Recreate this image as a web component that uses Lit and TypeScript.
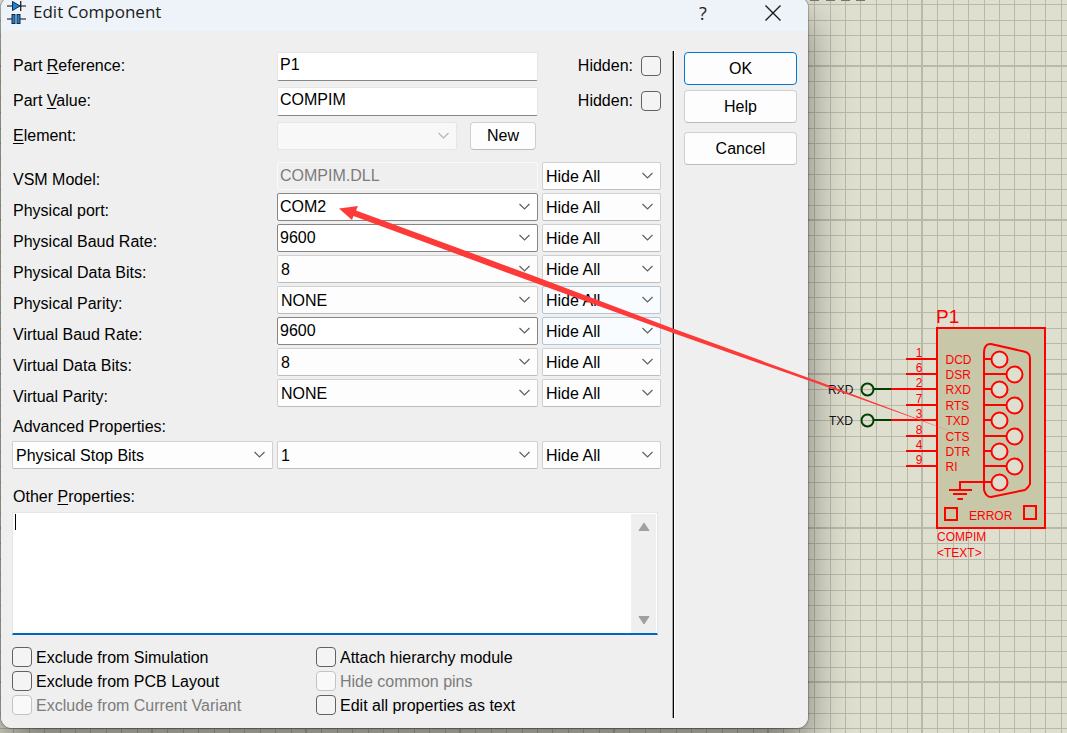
import { LitElement, html, svg, css } from "lit";
import { customElement } from "lit/decorators.js";
import { classMap } from "lit/directives/class-map.js";

interface FieldRow {
  label: string;
  value: string;
  kind: "readonly" | "editable" | "list";
  tint?: boolean;
}

const MODEL_FIELDS: FieldRow[] = [
  { label: "VSM Model:", value: "COMPIM.DLL", kind: "readonly" },
  { label: "Physical port:", value: "COM2", kind: "editable" },
  { label: "Physical Baud Rate:", value: "9600", kind: "editable" },
  { label: "Physical Data Bits:", value: "8", kind: "list" },
  { label: "Physical Parity:", value: "NONE", kind: "list", tint: true },
  { label: "Virtual Baud Rate:", value: "9600", kind: "editable", tint: true },
  { label: "Virtual Data Bits:", value: "8", kind: "list" },
  { label: "Virtual Parity:", value: "NONE", kind: "list" },
];

const GRID_PITCH = 15.4;
const GRID_ORIGIN = { x: 922, y: 66 };

/* Sheet grid: a thin line per step, a heavy one every ten steps. */
@customElement("sheet-grid")
export class SheetGrid extends LitElement {
  static styles = css`
    :host { display: block; overflow: hidden; }
    .grid { display: block; width: 100%; height: 100%; }
  `;

  private lines(origin: number, vertical: boolean) {
    const out = [];
    for (let i = -62; i < 110; i++) {
      const at = Math.round(origin + i * GRID_PITCH);
      if (at < 0) continue;
      const heavy = i % 10 === 0;
      const start = heavy ? at - 1 : at;
      const size = heavy ? 2 : 1;
      out.push(
        vertical
          ? svg`<rect x=${start} y="0" width=${size} height="100%" fill="#b9b9aa"></rect>`
          : svg`<rect x="0" y=${start} width="100%" height=${size} fill="#b9b9aa"></rect>`
      );
    }
    return out;
  }

  render() {
    return html`<svg class="grid" aria-hidden="true">
      ${this.lines(GRID_ORIGIN.x, true)}${this.lines(GRID_ORIGIN.y, false)}
    </svg>`;
  }
}

/* The COMPIM connector with its pins and the RXD / TXD terminals. */
@customElement("compim-symbol")
export class CompimSymbol extends LitElement {
  static styles = css`
    :host { display: block; }
    .drawing { display: block; }
    .text { font: 12px "Liberation Sans", Arial, sans-serif; fill: #f00; }
    .name { font-size: 19px; }
    .terminal { fill: #111; }
    .wire { stroke: #f00; stroke-width: 2; fill: none; }
    .lead { stroke: #004000; stroke-width: 2; fill: none; }
    .socket { stroke: #f00; stroke-width: 2; fill: #dfdfd0; }
  `;

  render() {
    const pins: [string, string, number][] = [
      ["1", "DCD", 359],
      ["6", "DSR", 374],
      ["2", "RXD", 389],
      ["7", "RTS", 405],
      ["3", "TXD", 420],
      ["8", "CTS", 436],
      ["4", "DTR", 451],
      ["9", "RI", 466],
    ];
    return html`<svg class="drawing" width="259" height="733" viewBox="808 0 259 733">
      ${[810, 826, 841, 856].map((x) => svg`<rect x=${x} y="0" width="9" height="1" fill="#77776e"></rect>`)}
      <text class="text name" x="936" y="323">P1</text>
      <rect x="937" y="328" width="108" height="200" fill="#c8c8a9" stroke="#f00" stroke-width="2"></rect>
      <path class="wire" d="M984 352 Q984.500 343.500 991 344 L1024 351.500 Q1030 353 1030 358 V484 Q1029 487 1025 490 L991 497 Q986 497 984 490 Z"></path>
      ${pins.map(
        ([num, label, y], i) => svg`
          <path class="wire" d="M${i === 2 || i === 4 ? 891 : 906} ${y} H937"></path>
          <path class="wire" d="M984 ${y} H${i % 2 ? 1007 : 992}"></path>
          <circle class="socket" cx=${i % 2 ? 1014.5 : 999.5} cy=${y + 0.5} r="8"></circle>
          <text class="text" x="919" y=${y - 2} text-anchor="middle">${num}</text>
          <text class="text" x="945.5" y=${y + 5}>${label}</text>`
      )}
      <path class="wire" d="M992 482 H960 V490 M949 490 H972 M953 494 H967 M957.500 499 H963"></path>
      <circle class="socket" cx="999.500" cy="482.500" r="8"></circle>
      <rect class="wire" x="945" y="508" width="12" height="12"></rect>
      <rect class="wire" x="1024" y="506" width="12" height="13"></rect>
      <text class="text" x="969" y="520">ERROR</text>
      <text class="text" x="937" y="541">COMPIM</text>
      <text class="text" x="937" y="557">&lt;TEXT&gt;</text>
      ${[389, 420].map(
        (y) => svg`<circle class="lead" cx="867.5" cy=${y + 0.5} r="6"></circle>
          <path class="lead" d="M874 ${y} H891"></path>`
      )}
      <text class="text terminal" x="828" y="394">RXD</text>
      <text class="text terminal" x="829" y="425">TXD</text>
    </svg>`;
  }
}

@customElement("edit-component-dialog")
export class EditComponentDialog extends LitElement {
  static styles = css`
    :host {
      display: block;
      font: 16px/18px "Liberation Sans", Arial, sans-serif;
      color: #000;
    }
    * { box-sizing: border-box; }
    .window {
      background: #efefef;
      border-radius: 11px;
      overflow: hidden;
    }
    .titlebar {
      display: flex;
      align-items: center;
      height: 34px;
      padding: 0 24px 0 6px;
      background: #eef3f9;
    }
    .title {
      flex: 1;
      margin: 0;
      padding: 0 0 4px 6px;
      font: 17px/24px "Open Sans", "Noto Sans", sans-serif;
      color: #1b1b1b;
    }
    .caption-button {
      display: grid;
      place-items: center;
      width: 22px;
      height: 30px;
      margin: 0 0 3px 48px;
      padding: 0;
      border: 0;
      background: none;
      font: 18px/24px "Open Sans", "Noto Sans", sans-serif;
      color: #1b1b1b;
    }
    .body {
      display: flex;
      padding: 20px 11px 10px 11px;
    }
    .form {
      flex: 1;
      min-width: 0;
      padding: 1px 0 3px;
    }
    .fields {
      display: grid;
      grid-template-columns: 265px minmax(0, 1fr) 119px;
    }
    .identity { row-gap: 7px; grid-auto-rows: 28px; align-items: center; }
    .identity .box-cell { align-self: start; }
    .model { row-gap: 3px; grid-auto-rows: 28px; margin-top: 12px; }
    .model .caption { padding: 9px 0 0 1px; }
    .advanced { grid-auto-rows: 28px; margin-top: 5px; }
    .caption { padding-left: 1px; }
    .block-caption { display: block; padding-left: 1px; margin-top: 11px; }
    .other-caption { margin-top: 19px; }
    .key { text-decoration: underline; text-underline-offset: 2px; text-decoration-thickness: 1px; }

    .text-box {
      width: 100%;
      min-width: 0;
      height: 29px;
      margin: 0;
      padding: 0 2px 3px;
      border: 1px solid #e6e6e6;
      border-bottom-color: #868686;
      border-radius: 2px;
      background: #fff;
      font: inherit;
      color: #000;
      outline: none;
    }
    .text-box:disabled {
      height: 28px;
      padding-bottom: 1px;
      background: #efefef;
      border-color: #f9f9f9;
      color: #7c7c7c;
    }
    .box-cell { padding-right: 4px; display: flex; min-width: 0; }
    .element-cell { display: flex; justify-content: space-between; gap: 13px; padding-right: 6px; min-width: 0; }
    .combo { display: grid; flex: 1; min-width: 0; height: 28px; }
    .select {
      grid-area: 1 / 1;
      appearance: none;
      width: 100%;
      min-width: 0;
      height: 28px;
      margin: 0;
      padding: 2px 24px 0 3px;
      border: 1px solid #d0d0d0;
      border-bottom-color: #bdbdbd;
      border-radius: 2px;
      background: #fdfdfd;
      font: inherit;
      color: #000;
      opacity: 1;
      outline: none;
    }
    .editable .select { border-color: #868686; background: #fff; padding: 0 24px 0 2px; }
    .tint .select { border-color: #b4c5d3; background: #f9fcff; }
    .disabled .select { border-color: #e6e6e6; background: #f8f8f8; }
    .chevron { grid-area: 1 / 1; justify-self: end; align-self: center; margin-right: 7px; pointer-events: none; stroke: #606060; fill: none; }
    .disabled .chevron { stroke: #b5b5b5; }

    .hidden-toggle { display: flex; align-items: center; justify-content: flex-end; gap: 8px; }
    .check {
      appearance: none;
      flex: none;
      width: 20px;
      height: 20px;
      margin: 0;
      border: 1px solid #626262;
      border-radius: 4px;
      background: #f4f4f4;
    }
    .check:disabled { border-color: #c4c4c4; background: #f9f9f9; }

    .button {
      width: 100%;
      height: 33px;
      margin: 0;
      padding: 0;
      border: 1px solid #d0d0d0;
      border-bottom-color: #bcbcbc;
      border-radius: 4px;
      background: #fdfdfd;
      font: inherit;
      color: #000;
    }
    .button.small { flex: none; width: 66px; height: 28px; }
    .button.default { border-color: #0078d4; margin-bottom: 5px; }
    .button.help { margin-bottom: 9px; }

    .notes {
      display: flex;
      position: relative;
      height: 123px;
      margin: 6px 3px 0 0;
      border: 1px solid #e6e6e6;
      border-bottom: 2px solid #0067c0;
      background: #fff;
    }
    .notes-text {
      flex: 1;
      min-width: 0;
      margin: 0;
      padding: 1px 2px;
      border: 0;
      background: #fff;
      font: inherit;
      resize: none;
      outline: none;
    }
    .insertion { position: absolute; left: 2px; top: 1px; width: 1px; height: 16px; background: #000; }
    .scroll {
      display: flex;
      flex-direction: column;
      justify-content: space-between;
      width: 25px;
      margin: 1px 1px 0 0;
      padding: 5px 0;
      background: #efefef;
    }
    .scroll-arrow { display: grid; place-items: center; height: 16px; margin: 0; padding: 0; border: 0; background: none; }

    .options { display: grid; grid-template-columns: 304px 1fr; gap: 4px 0; margin-top: 12px; }
    .option { display: flex; align-items: center; gap: 4px; }
    .option.off { color: #7c7c7c; }
    .option-text { padding-top: 2px; }

    .divider {
      flex: none;
      width: 3px;
      margin: 0 9px 0 11px;
      border-left: 1px solid #a5a5a5;
      border-right: 1px solid #fff;
      background: #000;
    }
    .actions { flex: none; width: 113px; padding-top: 1px; }
  `;

  private combo(id: string, value: string, label: string, cls: Record<string, boolean> = {}) {
    return html`<div class=${classMap({ combo: true, ...cls })}>
      <select class="select" id=${id} aria-label=${label} ?disabled=${!!cls.disabled}>
        <option>${value}</option>
      </select>
      <svg class="chevron" width="13" height="8" viewBox="0 0 13 8" aria-hidden="true">
        <path d="M1.500 1 L6.500 6 L11.500 1" stroke-width="1.200"></path>
      </svg>
    </div>`;
  }

  private hiddenToggle(id: string) {
    return html`<label class="hidden-toggle" for=${id}>Hidden:<input class="check" type="checkbox" id=${id} /></label>`;
  }

  private option(text: string, off = false) {
    return html`<label class=${classMap({ option: true, off })}>
      <input class="check" type="checkbox" ?disabled=${off} /><span class="option-text">${text}</span></label>`;
  }

  private modelRow(row: FieldRow, i: number) {
    const id = `field-${i}`;
    return html`
      <label class="caption" for=${id}>${row.label}</label>
      <div class="box-cell">
        ${row.kind === "readonly"
          ? html`<input class="text-box" id=${id} disabled .value=${row.value} />`
          : this.combo(id, row.value, row.label, { editable: row.kind === "editable" })}
      </div>
      ${this.combo(`${id}-visibility`, "Hide All", `${row.label} visibility`, { tint: !!row.tint })}
    `;
  }

  render() {
    return html`<section class="window" role="dialog" aria-labelledby="title">
      <header class="titlebar">
        <svg width="20" height="28" viewBox="0 0 20 28" aria-hidden="true">
          <path d="M0 6 H19 M0 19 H5 M13 19 H19" stroke="#555" stroke-width="1.300" fill="none"></path>
          <path d="M13.700 1 V11" stroke="#222" stroke-width="1.300"></path>
          <path d="M5.500 1.500 L13 6 L5.500 10.500 Z" fill="#1a84da" stroke="#122a44"></path>
          <rect x="5" y="14.500" width="3" height="9" fill="#1a84da" stroke="#122a44"></rect>
          <rect x="10" y="14.500" width="3" height="9" fill="#1a84da" stroke="#122a44"></rect>
        </svg>
        <h1 class="title" id="title">Edit Component</h1>
        <button class="caption-button" aria-label="Help">?</button>
        <button class="caption-button" aria-label="Close">
          <svg width="16" height="16" viewBox="0 0 16 16"><path d="M0.500 0.500 L15.500 15.500 M15.500 0.500 L0.500 15.500" stroke="#1b1b1b" stroke-width="1.400"></path></svg>
        </button>
      </header>
      <div class="body">
        <div class="form">
          <div class="fields identity">
            <label class="caption" for="reference">Part <span class="key">R</span>eference:</label>
            <div class="box-cell"><input class="text-box" id="reference" .value=${"P1"} /></div>
            ${this.hiddenToggle("hide-reference")}
            <label class="caption" for="value">Part <span class="key">V</span>alue:</label>
            <div class="box-cell"><input class="text-box" id="value" .value=${"COMPIM"} /></div>
            ${this.hiddenToggle("hide-value")}
            <label class="caption" for="element"><span class="key">E</span>lement:</label>
            <div class="element-cell">
              ${this.combo("element", "", "Element", { disabled: true })}
              <button class="button small">New</button>
            </div>
          </div>
          <div class="fields model">${MODEL_FIELDS.map((row, i) => this.modelRow(row, i))}</div>
          <label class="block-caption" for="property">Advanced Properties:</label>
          <div class="fields advanced">
            <div class="box-cell">${this.combo("property", "Physical Stop Bits", "Advanced property")}</div>
            <div class="box-cell">${this.combo("property-value", "1", "Property value")}</div>
            ${this.combo("property-visibility", "Hide All", "Property visibility")}
          </div>
          <label class="block-caption other-caption" for="other">Other <span class="key">P</span>roperties:</label>
          <div class="notes">
            <textarea class="notes-text" id="other"></textarea>
            <span class="insertion"></span>
            <div class="scroll">
              <button class="scroll-arrow" aria-label="Scroll up">
                <svg width="12" height="10" viewBox="0 0 12 10"><path d="M6 1 L11 8.500 H1 Z" fill="#a0a0a0" stroke="#a0a0a0" stroke-linejoin="round"></path></svg>
              </button>
              <button class="scroll-arrow" aria-label="Scroll down">
                <svg width="12" height="10" viewBox="0 0 12 10"><path d="M6 9 L11 1.500 H1 Z" fill="#a0a0a0" stroke="#a0a0a0" stroke-linejoin="round"></path></svg>
              </button>
            </div>
          </div>
          <div class="options">
            ${this.option("Exclude from Simulation")} ${this.option("Attach hierarchy module")}
            ${this.option("Exclude from PCB Layout")} ${this.option("Hide common pins", true)}
            ${this.option("Exclude from Current Variant", true)} ${this.option("Edit all properties as text")}
          </div>
        </div>
        <div class="divider"></div>
        <div class="actions">
          <button class="button default">OK</button>
          <button class="button help">Help</button>
          <button class="button">Cancel</button>
        </div>
      </div>
    </section>`;
  }
}

@customElement("app-root")
export class AppRoot extends LitElement {
  static styles = css`
    :host {
      display: block;
      position: relative;
      height: 100vh;
      overflow: hidden;
      background: #dfdfd0;
    }
    .grid { position: absolute; inset: 0; }
    .sheet {
      position: relative;
      display: grid;
      grid-template-columns: minmax(0, 1fr) 259px;
      align-items: start;
    }
    .dialog {
      margin: -3px 0 0 1px;
      border-radius: 11px;
      box-shadow: 0 0 1px 1px rgba(0, 0, 0, 0.25), 0 22px 44px rgba(0, 0, 0, 0.46);
    }
    .arrow { position: absolute; left: 0; top: 0; pointer-events: none; }
  `;

  render() {
    return html`
      <sheet-grid class="grid"></sheet-grid>
      <main class="sheet">
        <edit-component-dialog class="dialog"></edit-component-dialog>
        <compim-symbol></compim-symbol>
      </main>
      <svg class="arrow" width="960" height="440" viewBox="0 0 960 440" aria-hidden="true">
        <path d="M339 208.500 L358 206 L356 210.500 L530 274.500 L673 328.500 L820 382 L954 432.500 L820 384.500 L673 333 L530 281 L353.500 216 L352 220 Z" fill="#fd3a38"></path>
      </svg>
    `;
  }
}
